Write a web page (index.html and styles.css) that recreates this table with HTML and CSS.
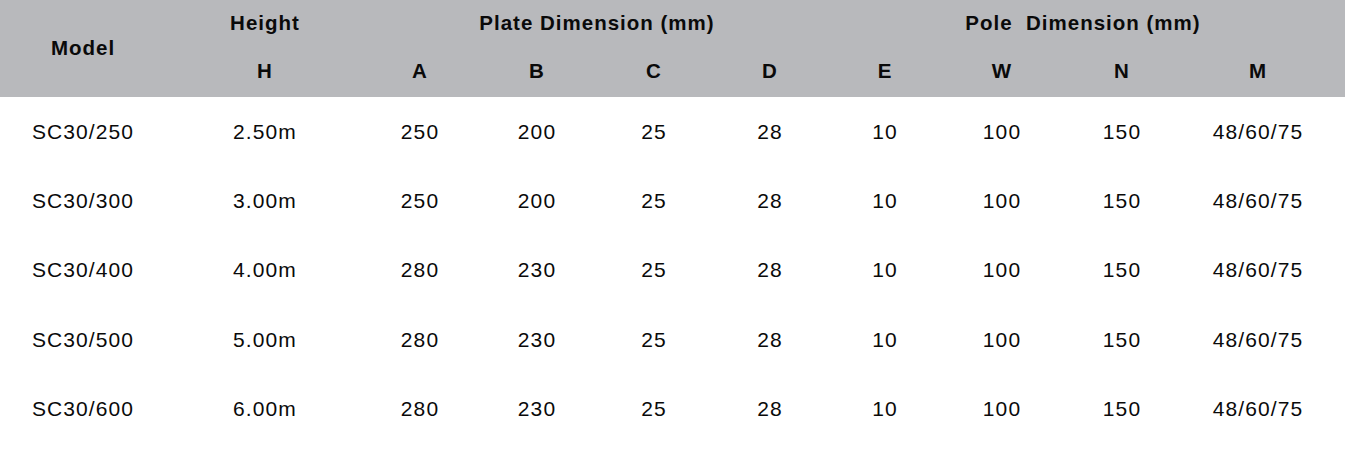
FILE: index.html
```html
<!DOCTYPE html>
<html>
<head>
<meta charset="utf-8">
<link rel="stylesheet" href="styles.css">
</head>
<body>
<div class="spec">
  <div class="head">
    <div class="cell model">Model</div>
    <div class="cell">Height</div>
    <div class="cell span-plate">Plate Dimension (mm)</div>
    <div class="cell span-pole">Pole&nbsp; Dimension (mm)</div>
    <div class="cell">H</div>
    <div class="cell">A</div>
    <div class="cell">B</div>
    <div class="cell">C</div>
    <div class="cell">D</div>
    <div class="cell">E</div>
    <div class="cell">W</div>
    <div class="cell">N</div>
    <div class="cell">M</div>
  </div>
  <div class="body">
    <div class="cell">SC30/250</div><div class="cell">2.50m</div><div class="cell">250</div><div class="cell">200</div><div class="cell">25</div><div class="cell">28</div><div class="cell">10</div><div class="cell">100</div><div class="cell">150</div><div class="cell">48/60/75</div>
    <div class="cell">SC30/300</div><div class="cell">3.00m</div><div class="cell">250</div><div class="cell">200</div><div class="cell">25</div><div class="cell">28</div><div class="cell">10</div><div class="cell">100</div><div class="cell">150</div><div class="cell">48/60/75</div>
    <div class="cell">SC30/400</div><div class="cell">4.00m</div><div class="cell">280</div><div class="cell">230</div><div class="cell">25</div><div class="cell">28</div><div class="cell">10</div><div class="cell">100</div><div class="cell">150</div><div class="cell">48/60/75</div>
    <div class="cell">SC30/500</div><div class="cell">5.00m</div><div class="cell">280</div><div class="cell">230</div><div class="cell">25</div><div class="cell">28</div><div class="cell">10</div><div class="cell">100</div><div class="cell">150</div><div class="cell">48/60/75</div>
    <div class="cell">SC30/600</div><div class="cell">6.00m</div><div class="cell">280</div><div class="cell">230</div><div class="cell">25</div><div class="cell">28</div><div class="cell">10</div><div class="cell">100</div><div class="cell">150</div><div class="cell">48/60/75</div>
  </div>
</div>
</body>
</html>
```

FILE: styles.css
```css
html, body {
  margin: 0;
  padding: 0;
  background: #ffffff;
}
body {
  font-family: "Liberation Sans", Arial, sans-serif;
  color: #0a0a0a;
  width: 1345px;
  height: 456px;
  overflow: hidden;
}
.spec {
  width: 1345px;
}
.head,
.body {
  display: grid;
  grid-template-columns: 166px 198px 112px 122px 112px 120px 110px 124px 116px 156px;
}
.head {
  background: #b8b9bc;
  grid-template-rows: 45px 52px;
  font-weight: bold;
  font-size: 20.5px;
  letter-spacing: 1px;
}
.body {
  grid-auto-rows: 69.3px;
  font-size: 21px;
  letter-spacing: 1.1px;
}
.cell {
  display: flex;
  align-items: center;
  justify-content: center;
  white-space: nowrap;
}
.model {
  grid-row: 1 / span 2;
  padding-bottom: 2px;
}
.span-plate {
  grid-column: 3 / span 4;
}
.span-pole {
  grid-column: 7 / span 4;
}
```
